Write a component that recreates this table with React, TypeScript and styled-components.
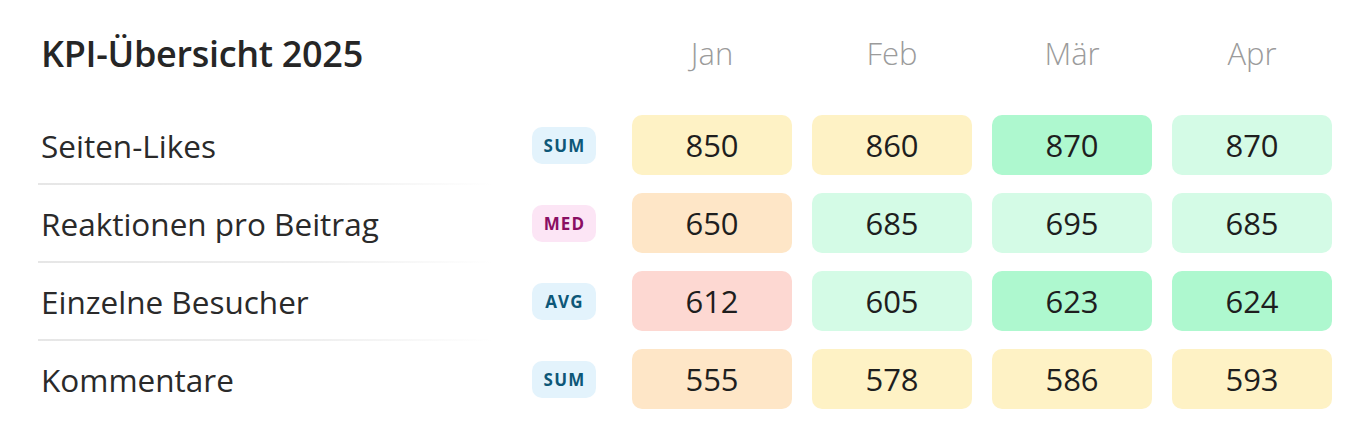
import React from "react";
import styled, { createGlobalStyle } from "styled-components";

const Global = createGlobalStyle`
  html, body { margin: 0; padding: 0; background: #ffffff; }
  body { font-family: "Open Sans", "Noto Sans", sans-serif; color: #222; }
`;

const Page = styled.div`
  width: 1372px;
  height: 440px;
  box-sizing: border-box;
  padding: 23px 40px 0 41px;
`;

const HeaderRow = styled.div`
  display: flex;
  align-items: center;
  height: 60px;
  margin-bottom: 32px;
`;

const Title = styled.h1`
  margin: 0;
  width: 591px;
  font-size: 36px;
  font-weight: 600;
  color: #262626;
  letter-spacing: -0.3px;
`;

const Months = styled.div`
  display: grid;
  grid-template-columns: repeat(4, 160px);
  column-gap: 20px;
`;

const Month = styled.div`
  text-align: center;
  font-size: 31px;
  font-weight: 300;
  color: #9b9b9b;
`;

const Row = styled.div`
  display: flex;
  align-items: center;
  height: 60px;
`;

const LabelCell = styled.div`
  width: 555px;
  margin-right: 36px;
  display: flex;
  align-items: center;
  justify-content: space-between;
`;

const Label = styled.span`
  font-size: 31.5px;
  font-weight: 400;
  color: #2a2a2a;
`;

const Badge = styled.span<{ $tone: "blue" | "pink" }>`
  display: inline-flex;
  align-items: center;
  justify-content: center;
  height: 37px;
  padding: 0 9px 0 10px;
  min-width: 64px;
  box-sizing: border-box;
  border-radius: 10px;
  font-size: 17px;
  font-weight: 700;
  letter-spacing: 1.2px;
  background: ${(p) => (p.$tone === "pink" ? "#fce5f5" : "#e3f3fc")};
  color: ${(p) => (p.$tone === "pink" ? "#8a0e63" : "#0d5778")};
`;

const Cells = styled.div`
  display: grid;
  grid-template-columns: repeat(4, 160px);
  column-gap: 20px;
`;

const Cell = styled.div<{ $bg: string }>`
  height: 60px;
  border-radius: 10px;
  background: ${(p) => p.$bg};
  display: flex;
  align-items: center;
  justify-content: center;
  font-size: 31px;
  font-weight: 400;
  color: #1e1e1e;
`;

const Divider = styled.div`
  height: 18px;
  display: flex;
  align-items: center;
`;

const Line = styled.div`
  width: 555px;
  height: 2px;
  margin-left: -3px;
  background: linear-gradient(90deg, #e6e6e6 0%, #efefef 50%, rgba(240, 240, 240, 0) 82%);
`;

const C = {
  yellow: "#fef2c5",
  orange: "#fee6c7",
  red: "#fdd8d2",
  mint: "#d4fbe6",
  green: "#aef8cf",
};

type RowData = {
  label: string;
  badge: string;
  tone: "blue" | "pink";
  cells: { v: number; bg: string }[];
};

const rows: RowData[] = [
  {
    label: "Seiten-Likes",
    badge: "SUM",
    tone: "blue",
    cells: [
      { v: 850, bg: C.yellow },
      { v: 860, bg: C.yellow },
      { v: 870, bg: C.green },
      { v: 870, bg: C.mint },
    ],
  },
  {
    label: "Reaktionen pro Beitrag",
    badge: "MED",
    tone: "pink",
    cells: [
      { v: 650, bg: C.orange },
      { v: 685, bg: C.mint },
      { v: 695, bg: C.mint },
      { v: 685, bg: C.mint },
    ],
  },
  {
    label: "Einzelne Besucher",
    badge: "AVG",
    tone: "blue",
    cells: [
      { v: 612, bg: C.red },
      { v: 605, bg: C.mint },
      { v: 623, bg: C.green },
      { v: 624, bg: C.green },
    ],
  },
  {
    label: "Kommentare",
    badge: "SUM",
    tone: "blue",
    cells: [
      { v: 555, bg: C.orange },
      { v: 578, bg: C.yellow },
      { v: 586, bg: C.yellow },
      { v: 593, bg: C.yellow },
    ],
  },
];

export default function App() {
  return (
    <Page>
      <Global />
      <HeaderRow>
        <Title>KPI-Übersicht 2025</Title>
        <Months>
          {["Jan", "Feb", "Mär", "Apr"].map((m) => (
            <Month key={m}>{m}</Month>
          ))}
        </Months>
      </HeaderRow>
      {rows.map((r, i) => (
        <React.Fragment key={r.label}>
          <Row>
            <LabelCell>
              <Label>{r.label}</Label>
              <Badge $tone={r.tone}>{r.badge}</Badge>
            </LabelCell>
            <Cells>
              {r.cells.map((c, j) => (
                <Cell key={j} $bg={c.bg}>
                  {c.v}
                </Cell>
              ))}
            </Cells>
          </Row>
          {i < rows.length - 1 && (
            <Divider>
              <Line />
            </Divider>
          )}
        </React.Fragment>
      ))}
    </Page>
  );
}
